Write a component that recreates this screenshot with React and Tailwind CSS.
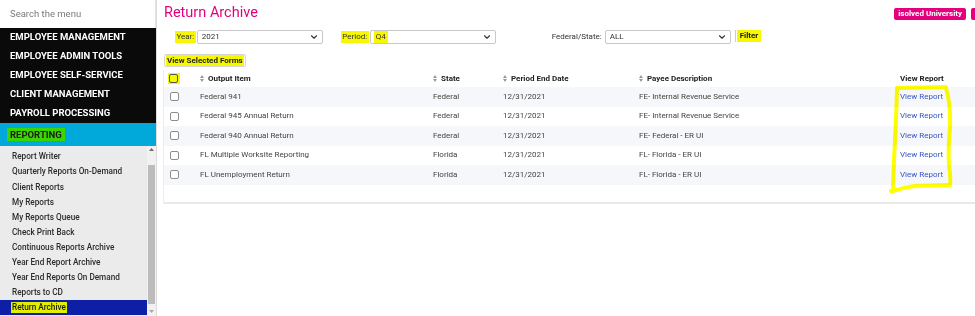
import { ChevronDown } from 'lucide-react'

const menu = [
  'EMPLOYEE MANAGEMENT',
  'EMPLOYEE ADMIN TOOLS',
  'EMPLOYEE SELF-SERVICE',
  'CLIENT MANAGEMENT',
  'PAYROLL PROCESSING',
]

const subMenu = [
  'Report Writer',
  'Quarterly Reports On-Demand',
  'Client Reports',
  'My Reports',
  'My Reports Queue',
  'Check Print Back',
  'Continuous Reports Archive',
  'Year End Report Archive',
  'Year End Reports On Demand',
  'Reports to CD',
]

const rows = [
  { item: 'Federal 941', state: 'Federal', date: '12/31/2021', payee: 'FE- Internal Revenue Service' },
  { item: 'Federal 945 Annual Return', state: 'Federal', date: '12/31/2021', payee: 'FE- Internal Revenue Service' },
  { item: 'Federal 940 Annual Return', state: 'Federal', date: '12/31/2021', payee: 'FE- Federal - ER UI' },
  { item: 'FL Multiple Worksite Reporting', state: 'Florida', date: '12/31/2021', payee: 'FL- Florida - ER UI' },
  { item: 'FL Unemployment Return', state: 'Florida', date: '12/31/2021', payee: 'FL- Florida - ER UI' },
]

const cols = 'grid grid-cols-[36px_233px_70px_136px_261px_1fr]'

function SortIcon() {
  return (
    <svg width="4" height="7" viewBox="0 0 4 7" className="mr-[4px] shrink-0">
      <path d="M2 0 L4 3 L0 3 Z M0 4 L4 4 L2 7 Z" fill="#9a9a9a" />
    </svg>
  )
}

function Checkbox() {
  return <span className="block w-[9px] h-[9px] rounded-[2px] border border-[#8d8d8d] bg-white" />
}

function Select({ value, hl }) {
  return (
    <div className="flex items-center justify-between w-[126px] h-[14px] border border-[#c9c9c9] rounded-[2px] bg-white pl-[4px] pr-[3px]">
      <span className={hl ? 'bg-[#f7f700] px-[2px] -ml-[1px]' : ''}>{value}</span>
      <ChevronDown size={10} strokeWidth={2.6} color="#333" />
    </div>
  )
}

export default function App() {
  return (
    <div className="flex w-[975px] h-[316px] overflow-hidden bg-white font-['Roboto',sans-serif] text-[#333]">
      {/* sidebar */}
      <aside className="w-[156px] shrink-0 flex flex-col">
        <div className="h-[28px] flex items-center pl-[10px] text-[9.5px] text-[#7b7b7b] border-r border-[#e4e4e4]">
          Search the menu
        </div>
        <div className="bg-[#0a0a0a]">
          {menu.map((m) => (
            <div key={m} className="h-[19px] flex items-center pl-[10px] text-[9.5px] font-bold text-white">
              {m}
            </div>
          ))}
        </div>
        <div className="h-[23px] bg-[#00a9d9] flex items-center pl-[7px]">
          <span className="bg-[#3bd600] text-[9.5px] font-bold text-[#1b1b1b] px-[3px] leading-[13px]">REPORTING</span>
        </div>
        <div className="flex-1 flex bg-[#ebebeb] min-h-0">
          <div className="flex-1 pt-[3px]">
            {subMenu.map((s) => (
              <div key={s} className="h-[15.1px] flex items-center pl-[12px] text-[8.2px] font-medium text-[#2c2c2c]">
                {s}
              </div>
            ))}
            <div className="h-[15.1px] flex items-center pl-[11px] bg-[#0c1fa6]">
              <span className="bg-[#e2ef00] text-[8.2px] font-medium text-[#1b1b1b] px-[1px] leading-[11px]">Return Archive</span>
            </div>
          </div>
          <div className="w-[9px] flex flex-col items-center bg-[#f1f1f1]">
            <svg width="5" height="4" viewBox="0 0 5 4" className="mt-[2px]">
              <path d="M2.5 0 L5 3 L0 3 Z" fill="#6d6d6d" />
            </svg>
            <div className="w-[7px] flex-1 mt-[13px] mb-[6px] bg-[#bcbcbc]" />
            <svg width="5" height="4" viewBox="0 0 5 4" className="mb-[2px]">
              <path d="M0 0 L5 0 L2.5 3 Z" fill="#a9a9a9" />
            </svg>
          </div>
        </div>
      </aside>

      {/* main */}
      <main className="relative flex-1 min-w-0 overflow-hidden border-l border-[#dcdcdc] pl-[7px]">
        <div className="h-[26px] flex items-center">
          <h1 className="text-[14.5px] text-[#e4007c] leading-none">Return Archive</h1>
          <div className="ml-auto mr-[-36px] flex gap-[5px] self-start mt-[8px]">
            <span className="h-[12px] px-[4px] rounded-[2px] bg-[#e4007c] text-white text-[8px] font-bold flex items-center">
              isolved University
            </span>
            <span className="h-[12px] w-[40px] rounded-[2px] bg-[#e4007c]" />
          </div>
        </div>

        <div className="mt-[4px] h-[14px] flex items-center text-[8px]">
          <span className="ml-[11px] bg-[#f7f700] px-[1.5px] mr-[1px]">Year:</span>
          <Select value="2021" />
          <span className="ml-[18px] bg-[#f7f700] px-[1.5px] mr-[1px]">Period:</span>
          <Select value="Q4" hl />
          <span className="ml-[56px] mr-[3px]">Federal/State:</span>
          <Select value="ALL" />
          <span className="ml-[4px] border-l border-[#ccc] pl-[1px] self-start">
            <span className="bg-[#f7f700] px-[3px] font-bold text-[#222] leading-[12px] block">Filter</span>
          </span>
        </div>

        <div className="mt-[10px] h-[13px] flex">
          <span className="border border-[#d6d6d6] rounded-[2px] px-[1px] flex items-center">
            <span className="bg-[#f7f700] text-[8px] font-bold text-[#1e1e1e] px-[1px] leading-[11px]">
              View Selected Forms
            </span>
          </span>
        </div>

        {/* table */}
        <div className="mt-[3px] -ml-[1px] border-l border-[#ececec]">
          <div className={`${cols} h-[17px] items-center text-[8px] font-bold text-[#222]`}>
            <div className="pl-[4px]">
              <span className="block w-[12px] h-[11px] bg-[#f7f700] p-[1px]">
                <span className="block w-[9px] h-[9px] rounded-[2px] border border-[#555]" />
              </span>
            </div>
            {['Output Item', 'State', 'Period End Date', 'Payee Description'].map((h) => (
              <div key={h} className="flex items-center">
                <SortIcon />
                {h}
              </div>
            ))}
            <div>View Report</div>
          </div>
          {rows.map((r, i) => (
            <div
              key={r.item}
              className={`${cols} h-[19.5px] items-center text-[8px] text-[#444] ${i % 2 === 0 ? 'bg-[#f6f7fa]' : 'bg-white'}`}
            >
              <div className="pl-[6px]">
                <Checkbox />
              </div>
              <div>{r.item}</div>
              <div>{r.state}</div>
              <div>{r.date}</div>
              <div>{r.payee}</div>
              <div className="text-[#3755c4]">View Report</div>
            </div>
          ))}
          <div className="h-[19px] border-b-2 border-[#e9e9e9]" />
        </div>

        {/* highlighter scribble */}
        <svg
          className="absolute left-0 top-0 pointer-events-none mix-blend-multiply"
          width="818"
          height="316"
          viewBox="157 0 818 316"
        >
          <g fill="none" stroke="#ffff00" strokeWidth="4" strokeLinecap="round" strokeLinejoin="round">
            <path d="M897 88 L946 87" />
            <path d="M897 89 L896 120 L894 160 L893 191" />
            <path d="M946 88 Q951 105 950 128 Q948 150 949 165 Q951 178 950 185" />
            <path d="M891 191 L897 190 Q905 187 915 186 L930 185.5 L950 185" />
          </g>
        </svg>
      </main>
    </div>
  )
}
